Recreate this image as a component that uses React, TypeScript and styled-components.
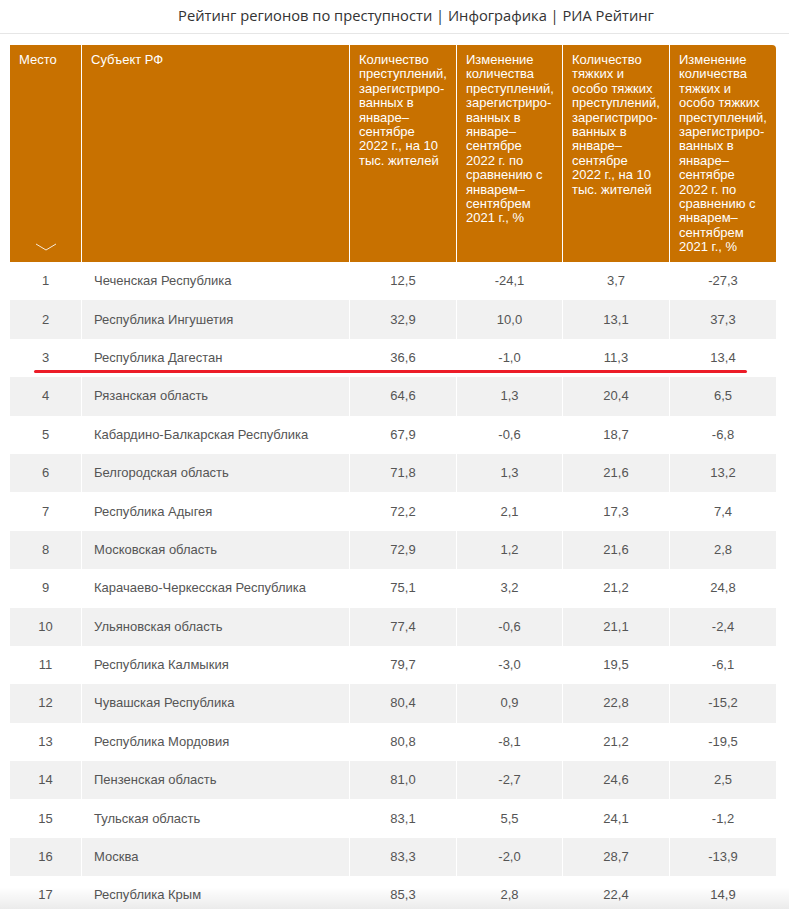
import React from "react";
import styled, { createGlobalStyle } from "styled-components";

const GlobalStyle = createGlobalStyle`
  html, body {
    margin: 0;
    padding: 0;
    background: #fff;
  }
  body {
    font-family: "Liberation Sans", Arial, sans-serif;
    overflow: hidden;
  }
`;

const COLS = "71px 267px 106px 105px 106px 106px";

const Page = styled.div`
  width: 789px;
  height: 909px;
  overflow: hidden;
  position: relative;
`;

const TitleBar = styled.div`
  height: 34px;
  box-sizing: border-box;
  border-bottom: 1px solid #e6e6e6;
  display: flex;
  align-items: center;
  justify-content: center;
  padding-left: 43px;
`;

const Title = styled.h1`
  margin: 0 0 4px;
  font-family: "Open Sans", "Noto Sans", sans-serif;
  font-weight: 400;
  font-size: 14.7px;
  color: #333;
  white-space: nowrap;
`;

const TableWrap = styled.div`
  position: relative;
  margin: 11px 0 0 10px;
  width: 766px;
`;

const Row = styled.div`
  display: grid;
  grid-template-columns: ${COLS};
  column-gap: 1px;
`;

const HeadCell = styled.div<{ $last?: boolean }>`
  position: relative;
  background: #c87100;
  color: #fff;
  font-size: 13px;
  line-height: 14.4px;
  padding: 8px 8px 8px 9px;
  height: 217px;
  box-sizing: border-box;
  border-top-right-radius: ${(p) => (p.$last ? "4px" : "0")};
`;

const SortChevron = styled.svg`
  position: absolute;
  left: 50%;
  bottom: 11px;
  transform: translateX(-50%);
`;

const BodyRow = styled(Row)<{ $odd: boolean }>`
  height: 38.4px;
  & > div {
    background: ${(p) => (p.$odd ? "#fff" : "#f1f1f1")};
  }
`;

const Cell = styled.div<{ $align?: "left" | "center" }>`
  display: flex;
  align-items: center;
  justify-content: ${(p) => (p.$align === "left" ? "flex-start" : "center")};
  padding-left: ${(p) => (p.$align === "left" ? "12px" : "0")};
  padding-bottom: 1px;
  font-size: 13px;
  color: #555;
  white-space: nowrap;
`;

const Marker = styled.div`
  position: absolute;
  left: 24px;
  top: 325px;
  width: 713px;
  height: 3px;
  border-radius: 2px;
  background: #ec1c28;
`;

const BottomFade = styled.div`
  position: absolute;
  left: 0;
  right: 0;
  bottom: 0;
  height: 22px;
  background: linear-gradient(to bottom, rgba(0, 0, 0, 0), rgba(0, 0, 0, 0.08));
  pointer-events: none;
`;

const NB = "\u00a0";

const headers = [
  "Место",
  "Субъект РФ",
  `Количество преступлений, зарегистриро-ванных в январе–сентябре 2022${NB}г., на 10 тыс. жителей`,
  `Изменение количества преступлений, зарегистриро-ванных в январе–сентябре 2022${NB}г. по сравнению с январем–сентябрем 2021${NB}г., %`,
  `Количество тяжких и особо тяжких преступлений, зарегистриро-ванных в январе–сентябре 2022${NB}г., на 10 тыс. жителей`,
  `Изменение количества тяжких и особо тяжких преступлений, зарегистриро-ванных в январе–сентябре 2022${NB}г. по сравнению с январем–сентябрем 2021${NB}г., %`,
];

const rows: [string, string, string, string, string][] = [
  ["Чеченская Республика", "12,5", "-24,1", "3,7", "-27,3"],
  ["Республика Ингушетия", "32,9", "10,0", "13,1", "37,3"],
  ["Республика Дагестан", "36,6", "-1,0", "11,3", "13,4"],
  ["Рязанская область", "64,6", "1,3", "20,4", "6,5"],
  ["Кабардино-Балкарская Республика", "67,9", "-0,6", "18,7", "-6,8"],
  ["Белгородская область", "71,8", "1,3", "21,6", "13,2"],
  ["Республика Адыгея", "72,2", "2,1", "17,3", "7,4"],
  ["Московская область", "72,9", "1,2", "21,6", "2,8"],
  ["Карачаево-Черкесская Республика", "75,1", "3,2", "21,2", "24,8"],
  ["Ульяновская область", "77,4", "-0,6", "21,1", "-2,4"],
  ["Республика Калмыкия", "79,7", "-3,0", "19,5", "-6,1"],
  ["Чувашская Республика", "80,4", "0,9", "22,8", "-15,2"],
  ["Республика Мордовия", "80,8", "-8,1", "21,2", "-19,5"],
  ["Пензенская область", "81,0", "-2,7", "24,6", "2,5"],
  ["Тульская область", "83,1", "5,5", "24,1", "-1,2"],
  ["Москва", "83,3", "-2,0", "28,7", "-13,9"],
  ["Республика Крым", "85,3", "2,8", "22,4", "14,9"],
];

export default function App() {
  return (
    <Page>
      <GlobalStyle />
      <TitleBar>
        <Title>Рейтинг регионов по преступности | Инфографика | РИА Рейтинг</Title>
      </TitleBar>
      <TableWrap>
        <Row>
          {headers.map((h, i) => (
            <HeadCell key={i} $last={i === headers.length - 1}>
              {h}
              {i === 0 && (
                <SortChevron width="22" height="8" viewBox="0 0 22 8">
                  <path d="M1 1 L11 7 L21 1" fill="none" stroke="rgba(255,255,255,0.85)" strokeWidth="1" />
                </SortChevron>
              )}
            </HeadCell>
          ))}
        </Row>
        {rows.map((r, i) => (
          <BodyRow key={i} $odd={i % 2 === 0}>
            <Cell>{i + 1}</Cell>
            <Cell $align="left">{r[0]}</Cell>
            <Cell>{r[1]}</Cell>
            <Cell>{r[2]}</Cell>
            <Cell>{r[3]}</Cell>
            <Cell>{r[4]}</Cell>
          </BodyRow>
        ))}
        <Marker />
      </TableWrap>
      <BottomFade />
    </Page>
  );
}
